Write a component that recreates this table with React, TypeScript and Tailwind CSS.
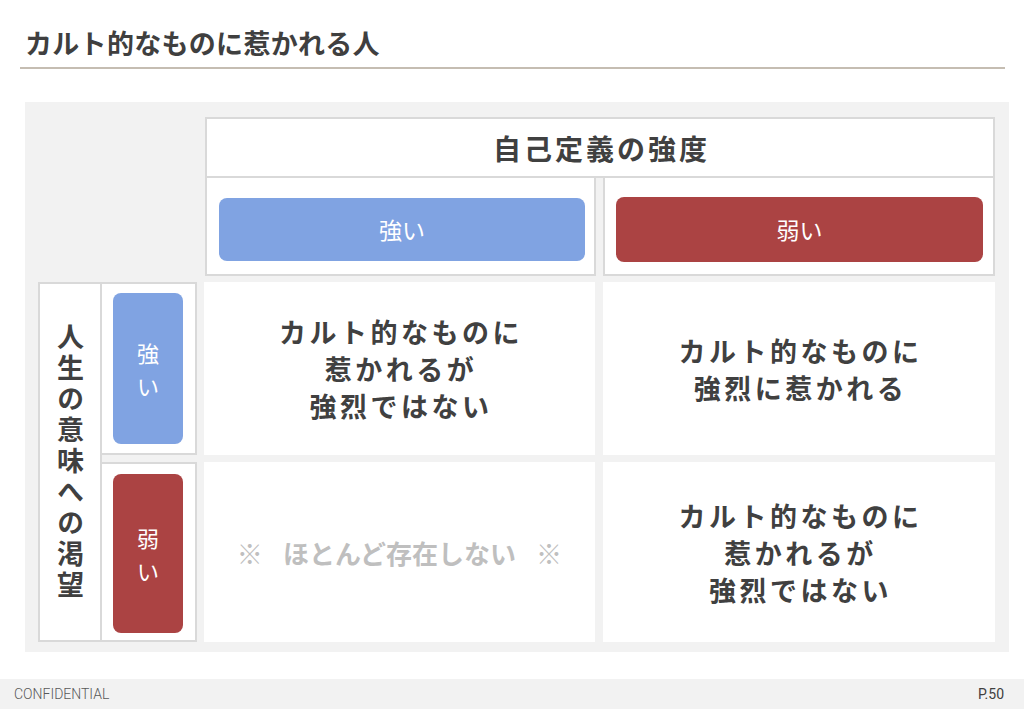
import React from "react";

const font = { fontFamily: '"Noto Sans CJK JP", "Noto Sans", sans-serif' };

function Lines({ lines }: { lines: string[] }) {
  return (
    <div className="text-center text-[27px] font-bold tracking-[3.5px] leading-[37px] pl-[3px]">
      {lines.map((l, i) => (
        <div key={i}>{l}</div>
      ))}
    </div>
  );
}

export default function App() {
  return (
    <div
      className="w-[1024px] h-[709px] bg-white flex flex-col overflow-hidden text-[#404040]"
      style={font}
    >
      {/* Title */}
      <div className="pt-[23px] pl-[25px] text-[27px] leading-[40px] font-bold text-[#3f3f3f] tracking-[0.3px]">
        カルト的なものに惹かれる人
      </div>
      <div className="mt-[4px] ml-[20px] w-[985px] h-[2px] bg-[#c5bdb2]" />

      {/* Panel */}
      <div className="mt-[33px] ml-[25px] w-[984px] h-[550px] bg-[#f2f2f2] pt-[15px] pl-[13px]">
        {/* Top header */}
        <div className="ml-[167px] w-[790px] flex flex-col">
          <div className="h-[61px] bg-white border-2 border-[#d9d9d9] flex items-center justify-center text-[28px] font-bold tracking-[3px] pl-[3px]">
            自己定義の強度
          </div>
          <div className="flex gap-[7px] h-[98px]">
            <div className="w-[391px] bg-white border-2 border-t-0 border-[#d9d9d9] pt-[20px] pb-[13px] pl-[12px] pr-[9px]">
              <div className="h-full rounded-[8px] bg-[#80a3e2] flex items-center justify-center text-white text-[23px]">
                強い
              </div>
            </div>
            <div className="w-[392px] bg-white border-2 border-t-0 border-[#d9d9d9] pt-[19px] pb-[12px] pl-[11px] pr-[10px]">
              <div className="h-full rounded-[8px] bg-[#ab4343] flex items-center justify-center text-white text-[23px]">
                弱い
              </div>
            </div>
          </div>
        </div>

        {/* Bottom grid */}
        <div className="mt-[6px] grid grid-cols-[64px_95px_398px_400px] grid-rows-[173px_180px] gap-y-[7px]">
          <div className="row-span-2 bg-white border-2 border-[#d9d9d9] flex items-center justify-center">
            <div className="[writing-mode:vertical-rl] text-[27px] font-bold tracking-[4px] leading-[32px]">
              人生の意味への渇望
            </div>
          </div>
          <div className="bg-white border-2 border-l-0 border-[#d9d9d9] pt-[9px] pb-[9px] pl-[11px] pr-[12px]">
            <div className="h-full rounded-[8px] bg-[#80a3e2] flex items-center justify-center text-white text-[22px] leading-[33px]">
              <div className="text-center">
                <div>強</div>
                <div>い</div>
              </div>
            </div>
          </div>
          <div className="ml-[7px] bg-white flex items-center justify-center">
            <Lines lines={["カルト的なものに", "惹かれるが", "強烈ではない"]} />
          </div>
          <div className="ml-[8px] bg-white flex items-center justify-center">
            <Lines lines={["カルト的なものに", "強烈に惹かれる"]} />
          </div>
          <div className="bg-white border-2 border-l-0 border-[#d9d9d9] pt-[10px] pb-[7px] pl-[11px] pr-[12px]">
            <div className="h-full rounded-[8px] bg-[#ab4343] flex items-center justify-center text-white text-[22px] leading-[33px]">
              <div className="text-center">
                <div>弱</div>
                <div>い</div>
              </div>
            </div>
          </div>
          <div className="ml-[7px] bg-white flex items-center justify-center gap-[20px] text-[26px] font-bold text-[#bfbfbf]">
            <span>※</span>
            <span>ほとんど存在しない</span>
            <span>※</span>
          </div>
          <div className="ml-[8px] bg-white flex items-center justify-center">
            <Lines lines={["カルト的なものに", "惹かれるが", "強烈ではない"]} />
          </div>
        </div>
      </div>

      <div className="flex-1" />
      {/* Footer */}
      <div
        className="h-[30px] bg-[#f2f2f2] flex items-center justify-between pl-[14px] pr-[20px] text-[14px] font-light text-[#595959]"
        style={{ fontFamily: 'Roboto, "Liberation Sans", sans-serif' }}
      >
        <span>CONFIDENTIAL</span>
        <span className="font-normal text-[#404040]">P.50</span>
      </div>
    </div>
  );
}
